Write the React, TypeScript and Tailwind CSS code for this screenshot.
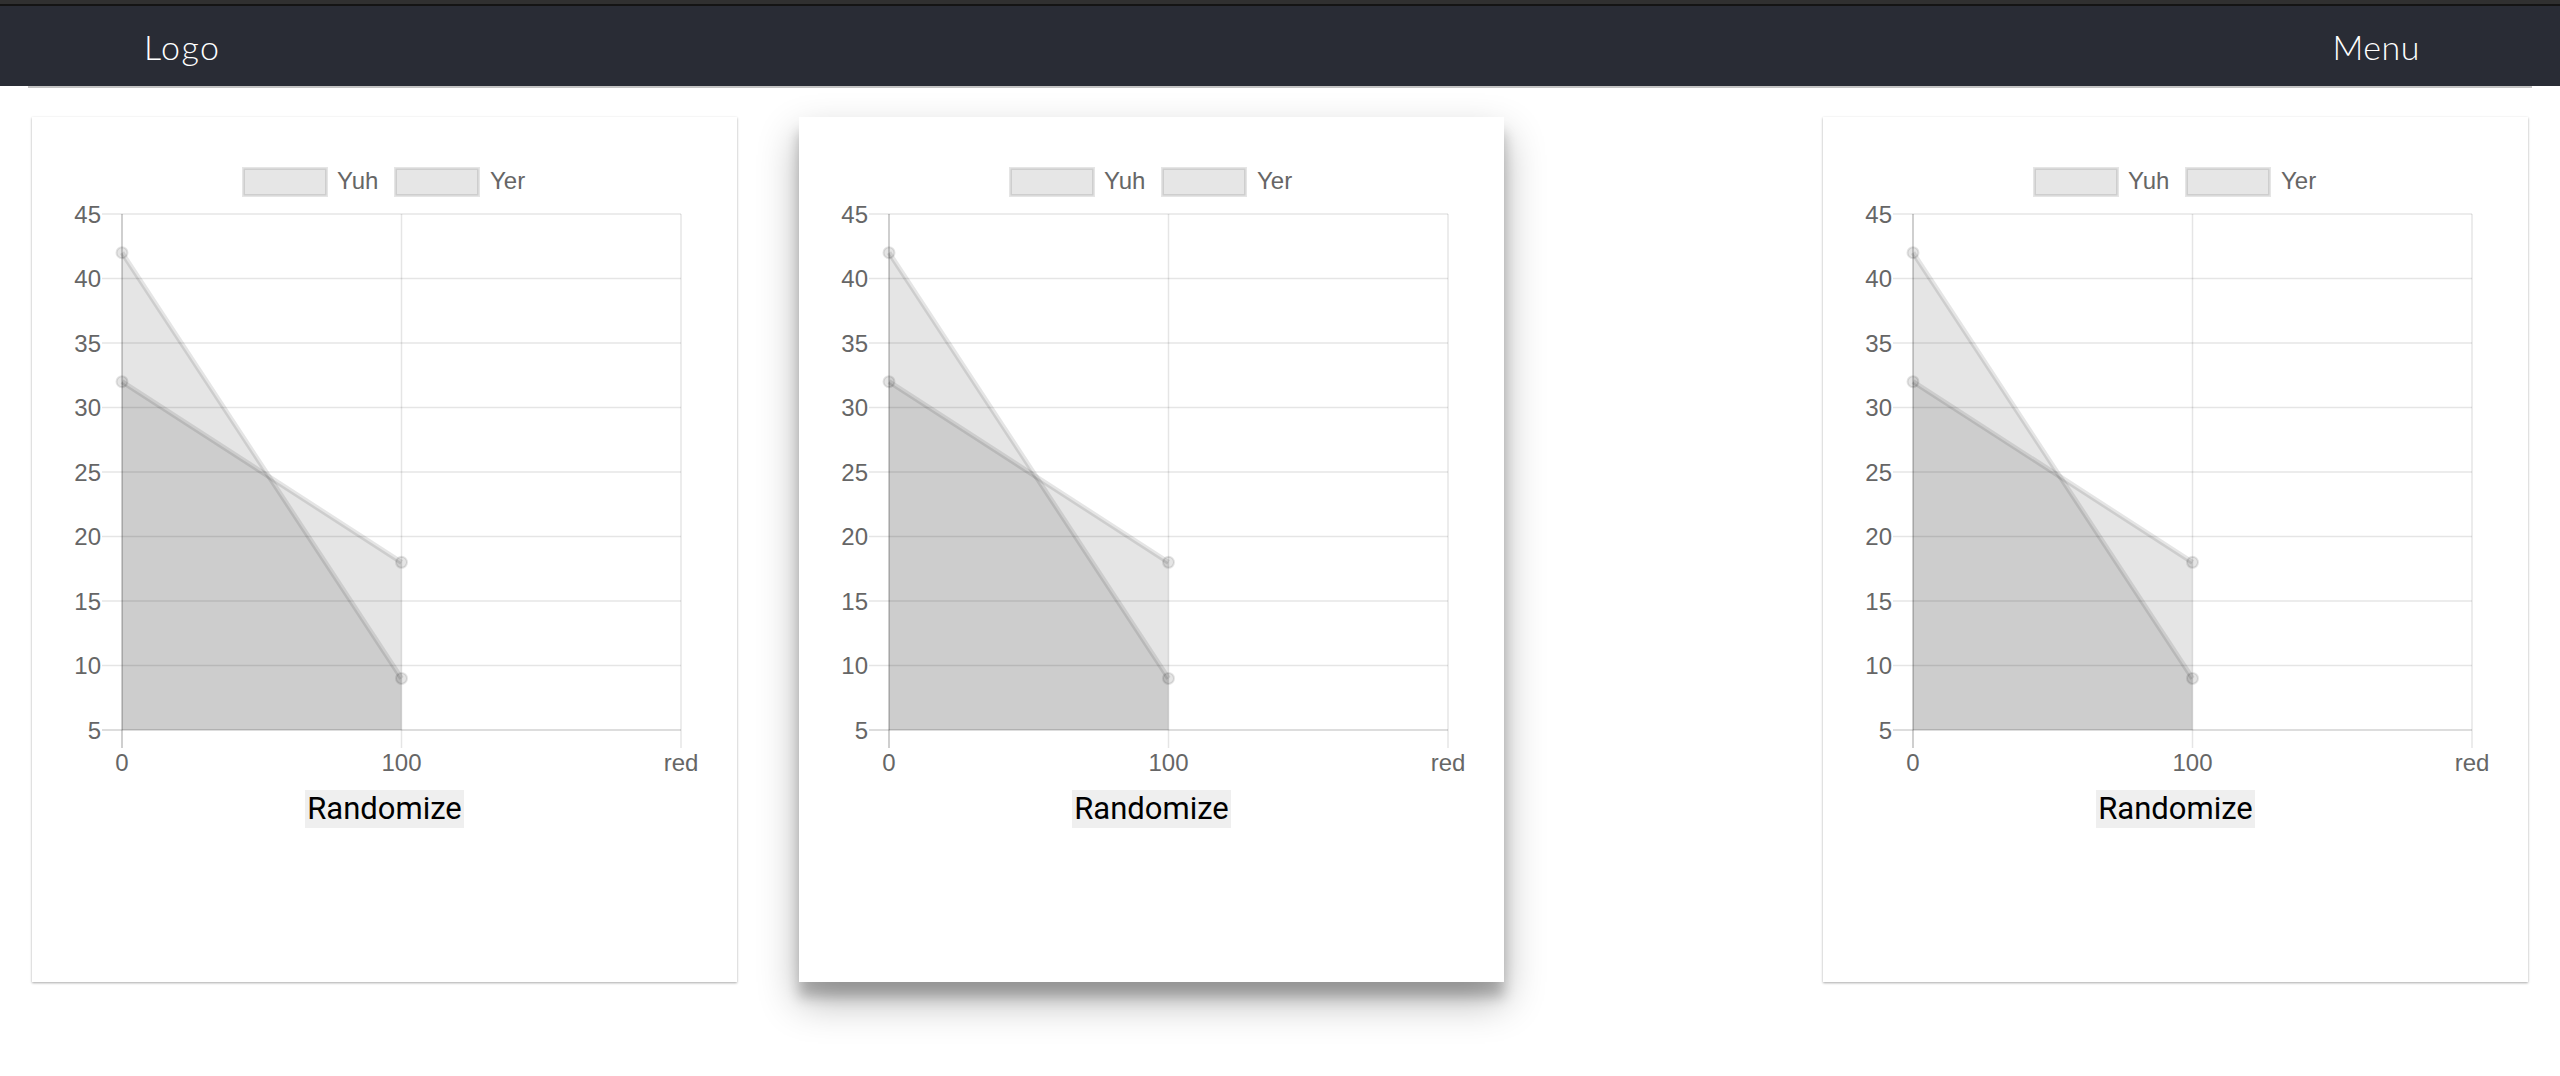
import React from 'react';

const ticks = [45, 40, 35, 30, 25, 20, 15, 10, 5];
const X0 = 90;
const X1 = 369.5;
const X2 = 649;
const TOP = 97;
const STEP = 64.5;
const BOTTOM = TOP + STEP * 8;
const yOf = (v: number) => TOP + ((45 - v) / 5) * STEP;

const datasets = [
	{ label: 'Yuh', data: [42, 9] },
	{ label: 'Yer', data: [32, 18] },
];

function Chart() {
	const font = '"Liberation Sans", Arial, sans-serif';
	return (
		<svg width={705} height={665} viewBox="0 0 705 665" className="block">
			{/* legend */}
			<rect x={211.5} y={51.5} width={83} height={27} fill="#e6e6e6" stroke="rgba(0,0,0,0.1)" strokeWidth={3} />
			<text x={305} y={72} fontSize={24} fill="#666" fontFamily={font}>
				Yuh
			</text>
			<rect x={363.5} y={51.5} width={83} height={27} fill="#e6e6e6" stroke="rgba(0,0,0,0.1)" strokeWidth={3} />
			<text x={458} y={72} fontSize={24} fill="#666" fontFamily={font}>
				Yer
			</text>

			{/* grid */}
			{ticks.map((t, i) => (
				<g key={t}>
					<line
						x1={70}
						x2={X2}
						y1={TOP + i * STEP}
						y2={TOP + i * STEP}
						stroke={i === 8 ? 'rgba(0,0,0,0.18)' : 'rgba(0,0,0,0.1)'}
						strokeWidth={1.5}
					/>
					<text x={69} y={TOP + i * STEP + 8.5} fontSize={24} fill="#666" textAnchor="end" fontFamily={font}>
						{t}
					</text>
				</g>
			))}
			<line x1={X1} x2={X1} y1={TOP} y2={BOTTOM + 18} stroke="rgba(0,0,0,0.1)" strokeWidth={1.5} />
			<line x1={X2} x2={X2} y1={TOP} y2={BOTTOM + 18} stroke="rgba(0,0,0,0.1)" strokeWidth={1.5} />
			<line x1={X0} x2={X0} y1={TOP} y2={BOTTOM + 18} stroke="rgba(0,0,0,0.25)" strokeWidth={1.5} />

			{/* data */}
			{datasets
				.slice()
				.reverse()
				.map((d) => (
					<g key={d.label}>
						<polygon
							points={`${X0},${yOf(d.data[0])} ${X1},${yOf(d.data[1])} ${X1},${BOTTOM} ${X0},${BOTTOM}`}
							fill="rgba(0,0,0,0.1)"
						/>
						<line
							x1={X0}
							y1={yOf(d.data[0])}
							x2={X1}
							y2={yOf(d.data[1])}
							stroke="rgba(0,0,0,0.1)"
							strokeWidth={5}
						/>
						<circle cx={X0} cy={yOf(d.data[0])} r={5.5} fill="rgba(0,0,0,0.1)" stroke="rgba(0,0,0,0.1)" strokeWidth={2} />
						<circle cx={X1} cy={yOf(d.data[1])} r={5.5} fill="rgba(0,0,0,0.1)" stroke="rgba(0,0,0,0.1)" strokeWidth={2} />
					</g>
				))}

			{/* x labels */}
			<text x={X0} y={654} fontSize={24} fill="#666" textAnchor="middle" fontFamily={font}>
				0
			</text>
			<text x={X1} y={654} fontSize={24} fill="#666" textAnchor="middle" fontFamily={font}>
				100
			</text>
			<text x={X2} y={654} fontSize={24} fill="#666" textAnchor="middle" fontFamily={font}>
				red
			</text>
		</svg>
	);
}

function Card({ className }: { className: string }) {
	return (
		<div className={`flex h-[865px] w-[705px] shrink-0 flex-col items-center bg-white ${className}`}>
			<Chart />
			<button className="mt-[8px] h-[38px] bg-[#efefef] px-[2px] font-['Roboto',sans-serif] text-[31px] leading-[38px] text-black">
				Randomize
			</button>
		</div>
	);
}

export default function App() {
	return (
		<div className="min-h-screen bg-white">
			<div className="h-[4px] bg-[#303030]" />
			<div className="h-[2px] bg-[#141414]" />
			<nav className="flex h-[80px] items-center justify-between bg-[#292c35] pl-[144px] pr-[140px] font-['Lato',sans-serif] text-[34px] font-light text-white">
				<span className="tracking-[1.5px]">Logo</span>
				<span className="tracking-[0.5px]">Menu</span>
			</nav>
			<div className="mx-[28px] h-[2px] bg-[#c4c4c4]" />

			<div className="mt-[29px] flex items-start">
				<Card className="ml-[32px] shadow-[0_1px_3px_rgba(0,0,0,0.12),0_1px_2px_rgba(0,0,0,0.24)]" />
				<Card className="ml-[62px] shadow-[0_19px_38px_rgba(0,0,0,0.30),0_15px_12px_rgba(0,0,0,0.22)]" />
				<Card className="ml-[319px] shadow-[0_1px_3px_rgba(0,0,0,0.12),0_1px_2px_rgba(0,0,0,0.24)]" />
			</div>
		</div>
	);
}
